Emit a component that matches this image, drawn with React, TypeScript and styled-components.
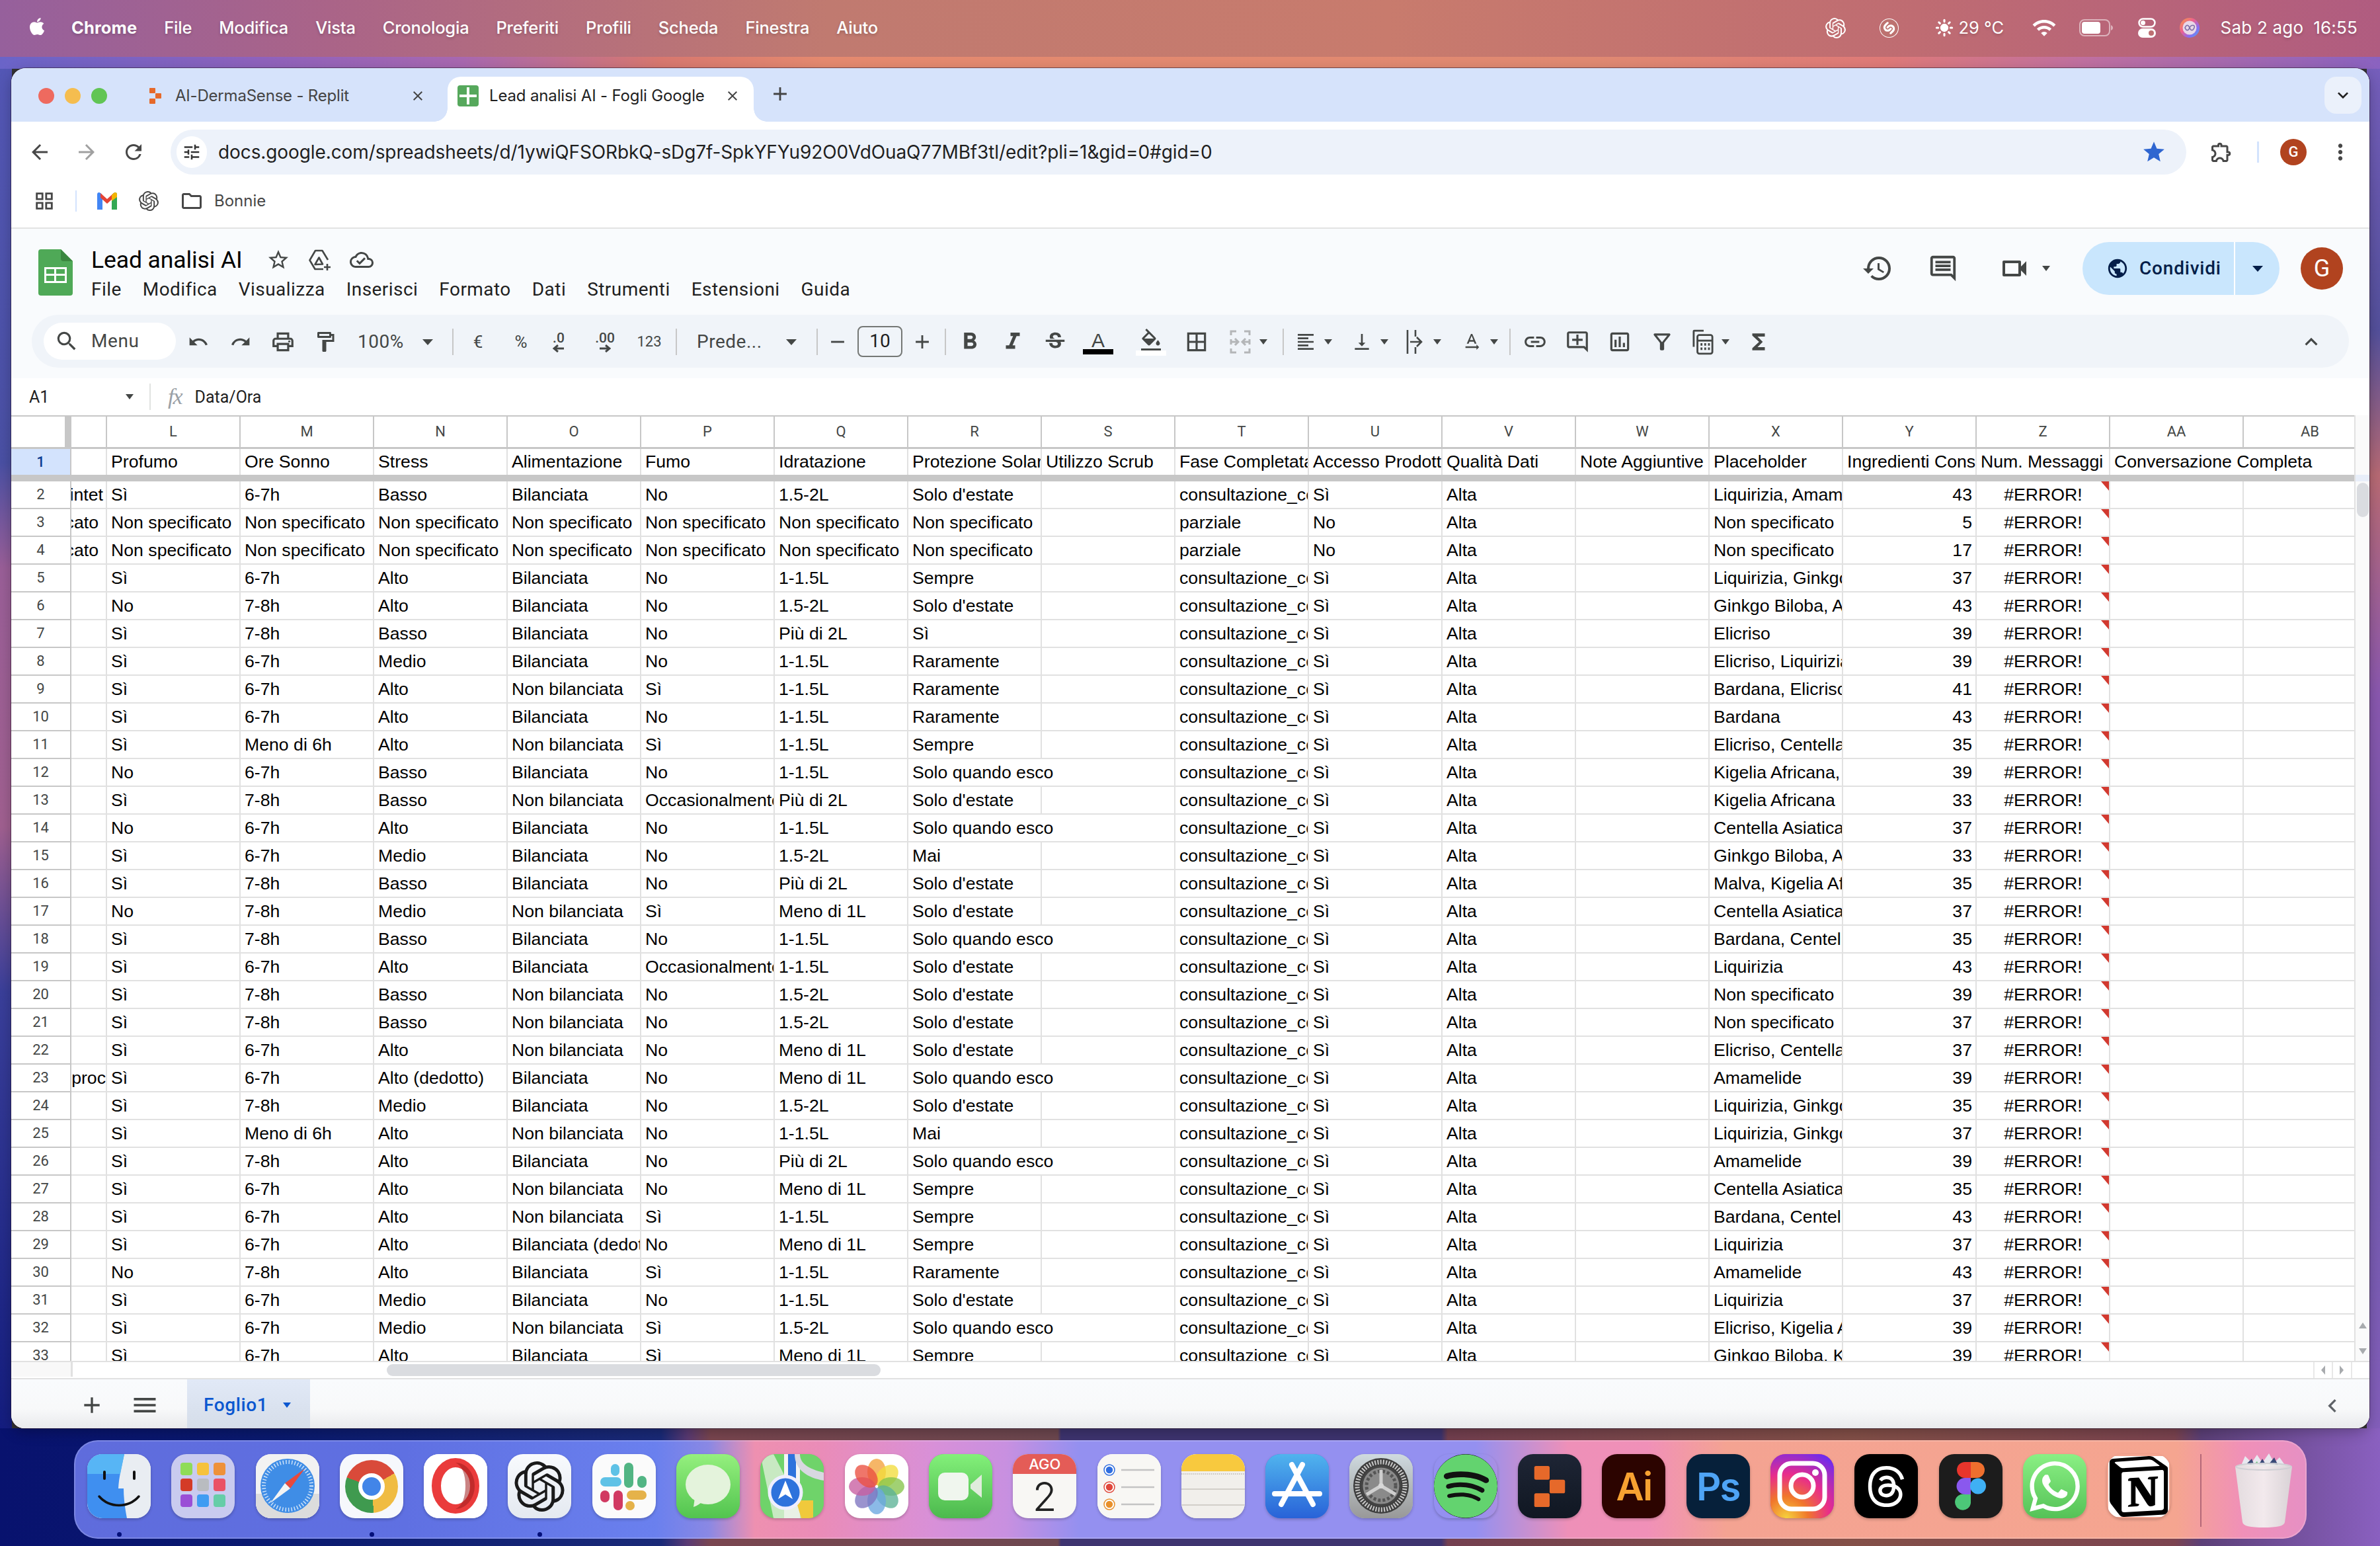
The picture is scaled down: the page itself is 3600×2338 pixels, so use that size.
import React from 'react';
import styled, { createGlobalStyle } from 'styled-components';
import {
  MdArrowBack, MdArrowForward, MdRefresh, MdTune, MdStar, MdOutlineExtension, MdMoreVert, MdKeyboardArrowDown,
  MdKeyboardArrowUp, MdKeyboardArrowLeft, MdClose, MdAdd, MdRemove, MdOutlineGridView, MdOutlineFolder, MdOutlineStarBorder,
  MdOutlineCloudDone, MdHistory, MdOutlineComment, MdOutlineVideocam, MdPublic, MdSearch, MdUndo, MdRedo,
  MdOutlinePrint, MdOutlineFormatPaint, MdFormatBold, MdFormatItalic, MdStrikethroughS, MdOutlineFormatColorFill, MdBorderAll,
  MdFormatAlignLeft, MdVerticalAlignBottom, MdLink, MdOutlineAddComment, MdOutlineInsertChart, MdOutlineFilterAlt, MdFunctions,
  MdMenu, MdTextRotationNone, MdWifi,
} from 'react-icons/md';
import { FaApple } from 'react-icons/fa';
import { SiOpenai, SiShazam, SiThreads, SiNotion, SiWhatsapp, SiSpotify } from 'react-icons/si';
import { Sun } from 'lucide-react';

const Global = createGlobalStyle`
  html, body { margin: 0; padding: 0; width: 3600px; height: 2338px; overflow: hidden; background: #333; }
  * { box-sizing: border-box; }
`;

const UI = `Inter, "Liberation Sans", sans-serif`;
const GS = `Roboto, "Open Sans", sans-serif`;
const ARIAL = `"Liberation Sans", Arial, sans-serif`;

const Desktop = styled.div`
  width: 3600px; height: 2338px; display: flex; flex-direction: column; overflow: hidden;
  background:
    linear-gradient(90deg, #6a64c8 0, #8f62bc 400px, #a868b0 700px, #d8786f 1000px, #e58a6f 1250px, #e08a72 2400px, #df7a78 2850px, #c070a0 3150px, #8a62c0 3600px) 0 86px / 100% 18px no-repeat,
    linear-gradient(90deg, #08126e 0, #0a1a70 420px, #1a2a78 1000px, #5a3a74 1040px, #7a4650 1075px, #6e4850 1600px, #3e3470 1605px, #3e3470 2180px, #744050 2190px, #845048 2800px, #7c4450 3290px, #5c4078 3330px, #8a60c0 3600px) 0 2160px / 100% 178px no-repeat,
    linear-gradient(180deg, #5558b8 0, #4a50a4 700px, #9a5f98 860px, #a06090 1250px, #3a3f9a 1500px, #0a1478 2338px) 0 0 / 18px 100% no-repeat,
    linear-gradient(180deg, #7e62c4 0, #54509c 500px, #b86a74 720px, #8a58b0 1050px, #6a58a8 1500px, #8a60c0 2338px) 100% 0 / 20px 100% no-repeat;
`;

const MenuBar = styled.header`
  height: 86px; flex: none; display: flex; align-items: center; padding: 0 34px 2px 41px; color: #fff;
  font: 500 25.5px/1 ${UI};
  background: linear-gradient(90deg, #96609c 0, #aa6488 500px, #c07a70 1250px, #c87b6d 2100px, #bf6c72 2900px, #b05c80 3600px);
  text-shadow: 0 2px 4px rgba(0,0,0,.2);
`;
const AppleMark = styled.span` width: 67px; display: flex; font-size: 30px; margin-top: -4px; `;
const MenuLabel = styled.span<{ $strong?: boolean }>`
  margin-right: 41px; font-weight: ${p => (p.$strong ? 700 : 500)}; letter-spacing: ${p => (p.$strong ? '.1px' : '-.2px')};
`;
const StatusBar = styled.div` margin-left: auto; display: flex; align-items: center; `;
const StatusItem = styled.span<{ $w: number }>`
  width: ${p => p.$w}px; display: flex; align-items: center; gap: 8px; font-weight: 400;
`;
const WhiteDisc = styled.span`
  width: 29px; height: 29px; border-radius: 50%; background: #fff; color: #bd7270; display: flex; align-items: center; justify-content: center;
`;
const Clock = styled.span` display: flex; gap: 15px; font-weight: 400; font-size: 26px; letter-spacing: .2px; `;

const BrowserWindow = styled.main`
  margin: 17px 16px 0 17px; height: 2057px; flex: none; border-radius: 22px 22px 20px 20px; overflow: hidden;
  display: flex; flex-direction: column; background: #fff;
  box-shadow: 0 0 0 1px rgba(40,20,40,.55), 0 6px 20px rgba(0,0,0,.25);
`;
const TabStrip = styled.div`
  height: 81px; flex: none; background: #d6e3fb; display: flex; align-items: flex-end; padding-left: 41px; position: relative;
`;
const Lights = styled.div` height: 68px; display: flex; align-items: center; gap: 16px; padding-bottom: 10px; `;
const Light = styled.span<{ $c: string }>` width: 24px; height: 24px; border-radius: 50%; background: ${p => p.$c}; `;
const InactiveTab = styled.div`
  height: 68px; width: 454px; margin-left: 61px; display: flex; align-items: center; padding: 0 33px 10px 0;
  font: 400 24px/1 ${UI}; color: #444; letter-spacing: -.2px;
`;
const TabFav = styled.span<{ $gap: number }>` display: flex; margin-right: ${p => p.$gap}px; `;
const TabClose = styled.span` margin-left: auto; display: flex; color: #444; `;
const ActiveTab = styled.div`
  height: 68px; width: 463px; background: #fff; border-radius: 20px 20px 0 0; display: flex; align-items: center;
  padding: 0 20px 10px 15px; font: 400 24px/1 ${UI}; color: #1f1f1f; position: relative; letter-spacing: -.15px;
  &::before, &::after { content: ''; position: absolute; bottom: 0; width: 20px; height: 20px; }
  &::before { left: -20px; background: radial-gradient(circle at 0 0, #d6e3fb 19.5px, #fff 20px); }
  &::after { right: -20px; background: radial-gradient(circle at 100% 0, #d6e3fb 19.5px, #fff 20px); }
`;
const NewTab = styled.span` margin: 0 0 8px 23px; height: 68px; display: flex; align-items: center; color: #444; `;
const TabListBtn = styled.span`
  margin: 0 12px 12px auto; width: 56px; height: 56px; border-radius: 18px; background: #ebf1fb; display: flex; align-items: center; justify-content: center; color: #1f1f1f;
`;
const NavRow = styled.div`
  height: 80px; flex: none; padding: 12px 0 0 25px; display: flex; align-items: flex-start; background: #fff; color: #474747;
  border-radius: 20px 20px 0 0;
`;
const NavIcons = styled.div` width: 216px; height: 68px; display: flex; align-items: center; gap: 35px; `;
const NavBtn = styled.span<{ $dim?: boolean }>` display: flex; color: ${p => (p.$dim ? '#a0a0a0' : '#474747')}; `;
const Omnibox = styled.div`
  width: 3049px; height: 68px; border-radius: 34px; background: #edf2fa; display: flex; align-items: center; padding: 0 30px 0 9px; color: #1f1f1f;
  font: 400 28px/1 ${UI}; letter-spacing: -.1px;
`;
const SiteInfo = styled.span`
  width: 46px; height: 48px; border-radius: 24px; background: #fff; display: flex; align-items: center; justify-content: center; margin-right: 17px; color: #333;
`;
const BookmarkStar = styled.span` margin-left: auto; display: flex; color: #2f66d0; `;
const NavRight = styled.div` height: 68px; display: flex; align-items: center; color: #474747; `;
const ExtBtn = styled.span` margin-left: 35px; display: flex; `;
const VLine = styled.span` width: 3px; height: 32px; background: #d3e3fd; margin: 0 32px 0 36px; `;
const ChromeAvatar = styled.span`
  width: 40px; height: 40px; border-radius: 50%; background: #b1431f; color: #fff; font: 500 22px/40px ${GS}; text-align: center;
`;
const MoreBtn = styled.span` margin-left: 32px; display: flex; `;
const BookmarkBar = styled.div`
  height: 82px; flex: none; border-bottom: 2px solid #e3e3e3; padding: 0 0 0 33px; display: flex; align-items: center; color: #474747;
  font: 400 24px/1 ${UI};
`;
const BarDivider = styled.span` width: 2px; height: 32px; background: #d3e3fd; margin: 0 30px; `;
const BookmarkIcon = styled.span` display: flex; margin-right: 32px; `;
const FolderLabel = styled.span` margin-left: 16px; `;

const SheetTop = styled.div` background: #f9fbfd; height: 226px; flex: none; padding-bottom: 16px; display: flex; flex-direction: column; `;
const TitleBar = styled.div` height: 130px; display: flex; padding: 31px 0 0 41px; `;
const TitleCol = styled.div` margin-left: 28px; display: flex; flex-direction: column; `;
const TitleLine = styled.div` height: 40px; display: flex; align-items: center; color: #444746; margin-top: -4px; `;
const DocTitle = styled.h1` font: 400 35.5px/40px ${GS}; color: #000; margin: 0 36px 0 0; letter-spacing: -.1px; `;
const TitleIcon = styled.span` width: 36px; display: flex; justify-content: center; margin-right: 27px; `;
const MenuLine = styled.nav`
  margin-top: 9px; display: flex; gap: 32px; font: 400 28px/32px ${GS}; color: #1f1f1f; letter-spacing: .45px;
`;
const HeaderActions = styled.div` margin-left: auto; height: 80px; padding-right: 40px; display: flex; align-items: center; color: #444746; margin-top: -11px; `;
const HeaderBtn = styled.span<{ $w: number; $gap?: number }>` width: ${p => p.$w}px; display: flex; align-items: center; gap: ${p => p.$gap ?? 0}px; `;
const ShareBtn = styled.div`
  width: 298px; height: 80px; margin-left: 32px; border-radius: 40px; background: #c9e6fd; display: flex; align-items: center;
  color: #041e49; font: 500 28px/1 ${GS}; letter-spacing: .8px;
`;
const ShareMain = styled.span`
  width: 231px; height: 80px; display: flex; align-items: center; gap: 16px; padding-left: 36px; border-right: 2px solid #fff;
`;
const ShareDrop = styled.span` flex: 1; display: flex; justify-content: center; `;
const SheetAvatar = styled.span`
  width: 64px; height: 64px; margin-left: 32px; border-radius: 50%; background: #b1431f; color: #fff; font: 400 36px/64px ${GS}; text-align: center;
`;
const ToolPill = styled.div`
  margin-left: 31px; width: 3505px; height: 80px; border-radius: 40px; background: #f0f4f9; display: flex; align-items: center; padding: 2px 38px 0 18px; color: #444746;
`;
const SearchBox = styled.div`
  width: 200px; height: 56px; margin-top: -2px; border-radius: 28px; background: #fff; margin-right: 2px; display: flex; align-items: center; gap: 18px; padding-left: 16px;
  font: 400 28px/1 ${GS}; color: #444746; letter-spacing: .6px;
`;
const Tool = styled.span<{ $w?: number; $pl?: number }>`
  width: ${p => p.$w ?? 64}px; height: 56px; flex: none; display: flex; align-items: center; justify-content: center; padding-left: ${p => p.$pl ?? 0}px; font: 400 26px/1 ${GS}; color: #444746;
`;
const SmallTool = styled(Tool)` font-size: 22px; `;
const Caret = styled.i<{ $c?: string }>`
  display: block; width: 0; height: 0; border-left: 8px solid transparent; border-right: 8px solid transparent; border-top: 9px solid ${p => p.$c ?? '#444746'};
`;
const SmallCaret = styled(Caret)` border-left-width: 6px; border-right-width: 6px; border-top-width: 8px; `;
const Select = styled.span<{ $w: number; $pl: number; $gap: number }>`
  width: ${p => p.$w}px; flex: none; height: 56px; display: flex; align-items: center; padding-left: ${p => p.$pl}px; gap: ${p => p.$gap}px; font: 400 28px/1 ${GS}; color: #444746; letter-spacing: .5px;
`;
const Dropdown = styled.span<{ $w: number; $dim?: boolean }>`
  width: ${p => p.$w}px; height: 56px; flex: none; display: flex; align-items: center; justify-content: center; gap: 12px; color: ${p => (p.$dim ? '#b4b6b8' : '#444746')};
`;
const IconBox = styled.span` width: 32px; display: flex; justify-content: center; `;
const Sep = styled.span<{ $ml?: number }>` width: 2px; height: 40px; flex: none; background: #c7c7c7; margin-left: ${p => p.$ml ?? 0}px; `;
const SizeBox = styled.span`
  width: 68px; height: 47px; margin-top: -2px; flex: none; border: 2px solid #747775; border-radius: 8px; display: flex; align-items: center; justify-content: center; font: 400 28px/1 ${GS}; color: #1f1f1f;
`;
const ColorStack = styled.span` width: 46px; display: flex; flex-direction: column; align-items: center; `;
const ColorBar = styled.span<{ $c: string }>` display: block; width: 46px; height: 8px; background: ${p => p.$c}; margin-top: -3px; `;
const ColorA = styled.span` font: 500 30px/32px ${ARIAL}; color: #444746; `;
const Stack = styled.span` display: flex; flex-direction: column; align-items: center; font: 500 21px/20px ${GS}; `;
const Collapse = styled.span` margin-left: auto; display: flex; `;

const FormulaBar = styled.div`
  height: 56px; flex: none; background: #fff; display: flex; align-items: center; padding-left: 27px; font: 400 25px/1 ${GS}; color: #1f1f1f;
`;
const NameBox = styled.span` width: 184px; display: flex; align-items: center; justify-content: space-between; padding-right: 24px; border-right: 2px solid #e1e3e1; height: 40px; `;
const Fx = styled.i` font: italic 400 34px/1 "Liberation Serif", serif; color: #9aa0a6; margin: 0 20px 0 26px; letter-spacing: -2px; `;

const GridArea = styled.section` height: 1432px; flex: none; display: flex; background: #fff; border-bottom: 2px solid #e1e1e1; `;
const GridBody = styled.div` width: 3544px; flex: none; overflow: hidden; border-top: 2px solid #c7c7c7; font: 400 26.67px/1 ${ARIAL}; color: #000; `;
const Row = styled.div<{ $h: number; $line: string; $lw: number }>`
  display: flex; height: ${p => p.$h}px; border-bottom: ${p => p.$lw}px solid ${p => p.$line};
`;
const Corner = styled.div` width: 91px; flex: none; border-right: 10px solid #c7c7c7; background: #fff; `;
const RowHead = styled.div<{ $on?: boolean }>`
  width: 91px; flex: none; display: flex; align-items: center; justify-content: center; margin-bottom: -2px;
  border-right: 2px solid #c7c7c7; border-bottom: 2px solid #c7c7c7; font: ${p => (p.$on ? 500 : 400)} 22px/1 ${GS};
  background: ${p => (p.$on ? '#d3e3fd' : '#fff')}; color: ${p => (p.$on ? '#0b3d91' : '#444746')};
`;
const ColHead = styled.div<{ $w: number }>`
  width: ${p => p.$w}px; flex: none; display: flex; align-items: center; justify-content: center;
  border-right: 2px solid #c7c7c7; font: 400 22px/1 ${GS}; color: #444746;
`;
const Cell = styled.div<{ $w: number; $align?: string; $spill?: boolean }>`
  width: ${p => p.$w}px; flex: none; overflow: ${p => (p.$spill ? 'visible' : 'hidden')}; white-space: nowrap; position: relative; display: flex; align-items: center;
  justify-content: ${p => p.$align ?? 'flex-start'}; padding: 0 5px 0 6px; border-right: 2px solid ${p => (p.$spill ? 'transparent' : '#e1e1e1')};
`;
const KCell = styled(Cell)<{ $pr: number }>` justify-content: flex-end; padding: 0 ${p => p.$pr}px 0 0; `;
const ErrorMark = styled.span`
  position: absolute; top: 0; right: 0; width: 0; height: 0; border-top: 14px solid #d2392f; border-left: 12px solid transparent;
`;
const Band = styled.div` height: 10px; background: #c7c7c7; `;
const VScroll = styled.aside` flex: 1; background: #fafafa; border-left: 2px solid #e1e1e1; display: flex; flex-direction: column; align-items: center; `;
const ScrollBand = styled.span` display: block; width: 100%; height: 10px; margin-top: 90px; background: #e8eef9; `;
const VThumb = styled.span` display: block; width: 18px; height: 52px; border-radius: 9px; background: #dadce0; margin-top: 2px; `;
const VArrows = styled.span` margin-top: auto; height: 66px; display: flex; flex-direction: column; align-items: center; justify-content: space-between; padding: 8px 0 10px; `;
const UpTri = styled.i` display: block; width: 0; height: 0; border-left: 6px solid transparent; border-right: 6px solid transparent; border-bottom: 9px solid #a8abae; `;
const DownTri = styled.i` display: block; width: 0; height: 0; border-left: 6px solid transparent; border-right: 6px solid transparent; border-top: 9px solid #a8abae; `;
const HScroll = styled.div` flex: none; display: flex; border-bottom: 2px solid #e1e1e1; height: 26px; background: #fff; `;
const HLeft = styled.span` width: 93px; flex: none; background: #f8f8f8; border-right: 3px solid #e1e1e1; margin-bottom: 2px; `;
const HTrack = styled.span` flex: 1; padding: 3px 0 0 475px; `;
const HThumb = styled.span` display: block; width: 747px; height: 18px; border-radius: 9px; background: #dadce0; `;
const HArrows = styled.span` width: 85px; flex: none; display: flex; align-items: center; `;
const HArrow = styled.span` width: 32px; height: 100%; display: flex; align-items: center; justify-content: center; border-left: 2px solid #e8e8e8; `;
const LeftTri = styled.i` display: block; width: 0; height: 0; border-top: 7px solid transparent; border-bottom: 7px solid transparent; border-right: 6px solid #a8abae; `;
const RightTri = styled.i` display: block; width: 0; height: 0; border-top: 7px solid transparent; border-bottom: 7px solid transparent; border-left: 6px solid #a8abae; `;
const SheetBar = styled.footer`
  flex: 1; display: flex; align-items: stretch; padding-left: 82px; color: #444746;
  background: linear-gradient(180deg, #f9fbfd 0, #f8f9fa 60%, #e9eaec 100%);
`;
const FootBtn = styled.span` width: 80px; display: flex; align-items: center; justify-content: center; padding-top: 4px; `;
const SheetTab = styled.div`
  width: 186px; margin-left: 24px; padding: 4px 0 0 25px; display: flex; align-items: center; gap: 23px; color: #0b57d0; font: 500 28px/1 ${GS}; letter-spacing: .6px;
  background: linear-gradient(180deg, #e1e9f7, #d5dde9);
`;
const FootRight = styled.span` margin-left: auto; width: 76px; color: #5f6368; display: flex; align-items: center; padding-top: 6px; `;

const Dock = styled.nav`
  position: relative; margin: 18px 0 0 112px; width: 3377px; height: 149px; flex: none; border-radius: 36px; padding: 21px 20px 0; display: flex; gap: 31.3px;
  background: linear-gradient(90deg, #5f6cdc 0, #5f70e2 500px, #6a80ee 880px, #8a88e4 960px, #ee90b0 1030px, #ea8cb8 1130px, #d890d8 1300px, #c890e0 1410px, #9490f0 1520px, #9490f0 2120px, #ee90b8 2260px, #f090b8 2380px, #f4a392 2500px, #f5a590 3180px, #f090b8 3280px, #e690c4 3377px);
  box-shadow: inset 0 0 0 2px rgba(255,255,255,.18);
`;
const DockItem = styled.div` position: relative; width: 96px; height: 97px; flex: none; `;
const RunDot = styled.span` position: absolute; left: 45px; top: 118px; width: 7px; height: 7px; border-radius: 50%; background: #04107a; `;
const Tile = styled.div<{ $bg: string }>`
  width: 96px; height: 97px; border-radius: 23px; background: ${p => p.$bg}; overflow: hidden; display: flex; align-items: center; justify-content: center;
  box-shadow: 0 2px 4px rgba(0,0,0,.22); position: relative;
`;
const CalendarTop = styled.div`
  position: absolute; left: 0; top: 0; width: 100%; height: 30px; background: #e45c57; color: #fff; font: 500 22px/30px ${UI}; text-align: center;
`;
const CalendarDay = styled.div` margin-top: 30px; font: 300 60px/1 ${UI}; color: #222; `;
const AdobeMark = styled.span<{ $c: string }>` font: 600 58px/1 ${UI}; color: ${p => p.$c}; letter-spacing: -2px; `;
const ChromeBall = styled.div`
  width: 80px; height: 80px; border-radius: 50%; display: flex; align-items: center; justify-content: center;
  background: conic-gradient(from -70deg, #d94a3a 0 130deg, #f0bc42 130deg 245deg, #3f9a4f 245deg 360deg);
`;
const ChromeEye = styled.div` width: 40px; height: 40px; border-radius: 50%; background: #4285e8; border: 6px solid #fff; `;
const DockSep = styled.span` width: 2px; height: 110px; margin: 0 18px 0 14px; background: rgba(130,60,90,.55); flex: none; `;
const TrashBox = styled.div` width: 88px; height: 112px; flex: none; margin-top: -1px; `;

const Sheet = ({ s = 32 }: { s?: number }) => (
  <svg width={s} height={s} viewBox="0 0 32 32"><rect width="32" height="32" rx="4" fill="#56a85c" /><path d="M14 3h4v11h11v4H18v11h-4V18H3v-4h11z" fill="#fff" /></svg>
);
const ReplitMark = ({ s = 24 }: { s?: number }) => (
  <svg width={s} height={s} viewBox="0 0 24 24" fill="#e6692a"><rect x="3" y="0" width="9" height="8" rx="1" /><rect x="12" y="8" width="9" height="8" rx="1" /><rect x="3" y="16" width="9" height="8" rx="1" /></svg>
);
const GmailMark = () => (
  <svg width="32" height="30" viewBox="0 0 32 30"><path d="M1 28V5c0-3 3-4 5-2l3 3v22z" fill="#4285f4" /><path d="M31 28V5c0-3-3-4-5-2l-3 3v22z" fill="#34a853" /><path d="M6 3l10 9 10-9 0 0v7L16 19 6 10z" fill="#e54335" /><path d="M23 6l3-3c2-2 5-1 5 2v4l-8 6z" fill="#f4b400" /></svg>
);
const SheetLogo = () => (
  <svg width="52" height="70" viewBox="0 0 52 70"><path d="M4 0h30l18 18v48a4 4 0 0 1-4 4H4a4 4 0 0 1-4-4V4a4 4 0 0 1 4-4z" fill="#4fa957" /><path d="M34 0l18 18H38a4 4 0 0 1-4-4z" fill="#3b873f" /><path d="M9 27h34v24H9zm3 3v7h12v-7zm15 0v7h13v-7zM12 40v8h12v-8zm15 0v8h13v-8z" fill="#fff" fillRule="evenodd" /></svg>
);
const DriveAdd = () => (
  <svg width="36" height="36" viewBox="0 0 36 36" fill="none" stroke="currentColor" strokeWidth="2.6" strokeLinejoin="round"><path d="M23 32H10.500L2.500 18.500 11 4h10.500L30 18" /><path d="M10.500 25l6-10.500 5.500 10z" /><path d="M29 24v10M24 29h10" /></svg>
);
const MergeGlyph = () => (
  <svg width="34" height="36" viewBox="0 0 34 36" fill="none" stroke="currentColor" strokeWidth="3"><path d="M11 2H3v6M23 2h8v6M11 34H3v-6M23 34h8v-6M3 14v8M31 14v8" /><path d="M2 18h11M9 13l5 5-5 5M32 18H21M25 13l-5 5 5 5" /></svg>
);
const WrapGlyph = () => (
  <svg width="28" height="36" viewBox="0 0 28 36" fill="none" stroke="currentColor" strokeWidth="2.6"><path d="M3 0v36M15 0v10M15 26v10M7 18h16M17 11l7 7-7 7" /></svg>
);
const FuncTable = () => (
  <svg width="34" height="40" viewBox="0 0 34 40" fill="none" stroke="currentColor" strokeWidth="3"><path d="M2 28V3a1 1 0 0 1 1-1h15" /><rect x="8" y="9" width="24" height="30" rx="3" /><path d="M8 18h24" /><path d="M13 24h3M19 24h3M25 24h3M13 31h3M19 31h3M25 31h3" strokeWidth="4" /></svg>
);
const ArrowLeftMini = () => (<svg width="18" height="12" viewBox="0 0 18 12" fill="none" stroke="currentColor" strokeWidth="3"><path d="M17 6H3M8 1L2 6l6 5" /></svg>);
const ArrowRightMini = () => (<svg width="18" height="12" viewBox="0 0 18 12" fill="none" stroke="currentColor" strokeWidth="3"><path d="M1 6h14M10 1l6 5-6 5" /></svg>);
const Battery = () => (
  <svg width="52" height="26" viewBox="0 0 52 26"><rect x="1" y="1" width="45" height="24" rx="7" fill="none" stroke="#fff" strokeOpacity=".5" strokeWidth="2" /><rect x="4" y="4" width="28" height="18" rx="4" fill="#fff" /><path d="M48 9c2 1 3 2 3 4s-1 3-3 4z" fill="#fff" fillOpacity=".5" /></svg>
);
const ControlCenter = () => (
  <svg width="27" height="30" viewBox="0 0 27 30"><rect x="1.500" y="1.500" width="24" height="12" rx="6" fill="none" stroke="#fff" strokeWidth="2.500" /><circle cx="7.500" cy="7.500" r="3.500" fill="#fff" /><rect x="0" y="16" width="27" height="14" rx="7" fill="#fff" /><circle cx="20" cy="23" r="4" fill="#bd6f72" /></svg>
);
const Siri = () => (
  <svg width="30" height="30" viewBox="0 0 30 30"><defs><linearGradient id="sg" x1="0" y1="0" x2="1" y2="1"><stop offset="0" stopColor="#f5a33f" /><stop offset=".4" stopColor="#ee5f8f" /><stop offset=".7" stopColor="#8a6cf2" /><stop offset="1" stopColor="#3fb2f0" /></linearGradient></defs><circle cx="15" cy="15" r="15" fill="url(#sg)" /><circle cx="15" cy="15" r="10.500" fill="#e8d8e8" /><path d="M8 15c2-5 5-5 7 0s5 5 7 0-5-5-7 0-5 5-7 0z" fill="none" stroke="#7f6fa8" strokeWidth="1.600" /></svg>
);

const Finder = () => (
  <svg width="96" height="97" viewBox="0 0 96 97"><rect width="96" height="97" fill="#e9edf2" /><path d="M0 0h56c-4 20-8 34-9 52h8c0 14 2 30 5 45H0z" fill="#3f8ff0" /><path d="M0 0h56l-6 30H0z" fill="#5ab9f5" opacity=".9" /><rect x="24" y="25" width="4" height="14" rx="2" fill="#111" /><rect x="69" y="25" width="4" height="14" rx="2" fill="#111" /><path d="M18 64c16 18 44 18 60 0" fill="none" stroke="#111" strokeWidth="3.500" strokeLinecap="round" /></svg>
);
const Launchpad = () => {
  const cs = ['#8fdc58', '#f6c23c', '#ee913a', '#d43b27', '#b9bcc0', '#ea5266', '#9a4fd6', '#3f9cf2', '#66cda8'];
  return (
    <svg width="72" height="72" viewBox="0 0 72 72">{cs.map((c, i) => <rect key={c} x={2 + (i % 3) * 25} y={(Math.floor(i / 3)) * 24} width="18" height="19" rx="4" fill={c} />)}</svg>
  );
};
const Safari = () => (
  <svg width="96" height="97" viewBox="0 0 96 97"><rect width="96" height="97" fill="#f2f2f2" /><rect y="60" width="96" height="37" fill="#dcdcdc" /><circle cx="48" cy="48" r="41" fill="#3f8de6" /><circle cx="48" cy="48" r="36" fill="none" stroke="#cfe3f8" strokeWidth="6" strokeDasharray="1.500 3" /><path d="M74 22L44 44l8 8z" fill="#e8493c" /><path d="M22 74l22-30 8 8z" fill="#f4f4f4" /></svg>
);
const Opera = () => (
  <svg width="96" height="97" viewBox="0 0 96 97"><rect width="96" height="97" fill="#fff" /><ellipse cx="48" cy="48" rx="29" ry="35" fill="none" stroke="#ea3b3b" strokeWidth="14" /><path d="M48 13c16 0 29 16 29 35S64 83 48 83c10-4 15-18 15-35S58 17 48 13z" fill="#9e1f1f" opacity=".55" /></svg>
);
const Slack = () => (
  <svg width="72" height="72" viewBox="0 0 72 72"><rect x="16" y="2" width="13" height="18" rx="6.500" fill="#5fc2e6" /><rect x="36" y="0" width="14" height="38" rx="7" fill="#52b584" /><rect x="56" y="20" width="14" height="18" rx="7" fill="#52b584" /><rect x="0" y="22" width="32" height="14" rx="7" fill="#5fc2e6" /><rect x="0" y="42" width="14" height="18" rx="7" fill="#d13a62" /><rect x="20" y="42" width="14" height="30" rx="7" fill="#d13a62" /><rect x="40" y="42" width="30" height="14" rx="7" fill="#e5b24a" /><rect x="38" y="58" width="14" height="14" rx="7" fill="#e5b24a" /></svg>
);
const Messages = () => (
  <svg width="96" height="97" viewBox="0 0 96 97"><defs><linearGradient id="mg" x1="0" y1="0" x2="0" y2="1"><stop offset="0" stopColor="#95f07e" /><stop offset="1" stopColor="#52c44f" /></linearGradient></defs><rect width="96" height="97" fill="url(#mg)" /><ellipse cx="48" cy="46" rx="34" ry="30" fill="#e4f3dc" /><path d="M28 66l-2 14c6-2 11-6 14-9z" fill="#e4f3dc" /></svg>
);
const Maps = () => (
  <svg width="96" height="97" viewBox="0 0 96 97"><rect width="96" height="97" fill="#6fd36a" /><path d="M36 0h24v97H36z" fill="#f4f4f4" /><path d="M42 0h12v60H42z" fill="#2d72dc" /><path d="M60 0c0 14 12 22 36 28v12C72 36 52 24 52 0z" fill="#d8d8e0" /><path d="M0 0h20l50 97H20z" fill="#e5f0e0" opacity=".75" /><path d="M54 70h26v27H62z" fill="#f0c93c" /><circle cx="38" cy="58" r="24" fill="#2d72dc" stroke="#eef" strokeWidth="5" /><path d="M38 40l11 28-11-7-11 7z" fill="#fff" /></svg>
);
const Photos = () => {
  const cs = ['#f4a23c', '#f2dd3c', '#86c44c', '#5cb296', '#6aa6e0', '#7e74c0', '#c85ea0', '#ea5040'];
  return (
    <svg width="84" height="84" viewBox="0 0 84 84">{cs.map((c, i) => <ellipse key={c} cx="42" cy="20" rx="14" ry="20" fill={c} fillOpacity=".78" transform={`rotate(${i * 45} 42 42)`} />)}</svg>
  );
};
const FaceTime = () => (
  <svg width="96" height="97" viewBox="0 0 96 97"><defs><linearGradient id="fg" x1="0" y1="0" x2="0" y2="1"><stop offset="0" stopColor="#83f07a" /><stop offset="1" stopColor="#4cb94d" /></linearGradient></defs><rect width="96" height="97" fill="url(#fg)" /><rect x="14" y="28" width="46" height="42" rx="10" fill="#f0f6ee" /><path d="M63 46l17-15v35L63 52z" fill="#e0ecdc" /></svg>
);
const Reminders = () => (
  <svg width="96" height="97" viewBox="0 0 96 97"><rect width="96" height="97" fill="#f8f7f4" />{[['#2f6ee0', 24], ['#e0483c', 50], ['#e8902c', 76]].map(([c, y]) => (<g key={c as string}><circle cx="18" cy={y as number} r="6" fill={c as string} stroke="#fff" strokeWidth="1.500" /><circle cx="18" cy={y as number} r="8" fill="none" stroke={c as string} strokeWidth="1.500" /><path d={`M36 ${y}h50`} stroke="#c4c4c4" strokeWidth="2.500" /></g>))}</svg>
);
const Notes = () => (
  <svg width="96" height="97" viewBox="0 0 96 97"><rect width="96" height="97" fill="#f1efeb" /><rect width="96" height="26" fill="#f8c93e" /><path d="M0 30h96" stroke="#c8c4bc" strokeWidth="2" strokeDasharray="1.500 1.500" /><path d="M0 53h96M0 77h96" stroke="#d2cfc9" strokeWidth="2" /></svg>
);
const AppStore = () => (
  <svg width="96" height="97" viewBox="0 0 96 97"><defs><linearGradient id="ag" x1="0" y1="0" x2="0" y2="1"><stop offset="0" stopColor="#50b4ee" /><stop offset="1" stopColor="#2862d8" /></linearGradient></defs><rect width="96" height="97" fill="url(#ag)" /><path d="M56 16L24 76M40 16l32 60M14 60h68" stroke="#fff" strokeWidth="8" strokeLinecap="round" /></svg>
);
const Settings = () => (
  <svg width="96" height="97" viewBox="0 0 96 97"><defs><linearGradient id="gg" x1="0" y1="0" x2="0" y2="1"><stop offset="0" stopColor="#cfdadf" /><stop offset="1" stopColor="#989898" /></linearGradient></defs><rect width="96" height="97" fill="url(#gg)" /><circle cx="48" cy="48" r="42" fill="#3e3e3e" /><circle cx="48" cy="48" r="36" fill="none" stroke="#c8c8c8" strokeWidth="7" strokeDasharray="2 2.200" /><circle cx="48" cy="48" r="29" fill="#8a8a8a" stroke="#444" strokeWidth="3" /><circle cx="48" cy="48" r="22" fill="none" stroke="#555" strokeWidth="5" strokeDasharray="4 3" /><path d="M48 48V24M48 48l22 13M48 48L26 61" stroke="#cfcfcf" strokeWidth="5" /><circle cx="48" cy="48" r="4" fill="#d8d8d8" /></svg>
);
const Insta = () => (
  <svg width="96" height="97" viewBox="0 0 96 97"><defs><radialGradient id="ig" cx=".25" cy="1" r="1.150"><stop offset="0" stopColor="#f6d23c" /><stop offset=".3" stopColor="#f0762c" /><stop offset=".6" stopColor="#e82c8c" /><stop offset="1" stopColor="#6a2cf0" /></radialGradient></defs><rect width="96" height="97" fill="url(#ig)" /><rect x="14" y="14" width="68" height="69" rx="18" fill="none" stroke="#fff" strokeWidth="7" /><circle cx="48" cy="48" r="17" fill="none" stroke="#fff" strokeWidth="7" /><circle cx="68" cy="28" r="5" fill="#fff" /></svg>
);
const Figma = () => (
  <svg width="54" height="74" viewBox="0 0 54 74"><path d="M18 0h9v24H18a12 12 0 0 1 0-24z" fill="#e8352c" /><path d="M27 0h9a12 12 0 0 1 0 24h-9z" fill="#ee6f2e" /><path d="M18 24h9v25H18a12 12 0 0 1 0-25z" fill="#8a58ee" /><circle cx="38" cy="36.500" r="12" fill="#3fb0f4" /><path d="M18 49h9v13a12 12 0 1 1-9-13z" fill="#4cc878" /></svg>
);
const Trash = () => (
  <svg width="88" height="112" viewBox="0 0 88 112"><defs><linearGradient id="tg" x1="0" y1="0" x2="1" y2="0"><stop offset="0" stopColor="#e2e2e2" /><stop offset=".5" stopColor="#f3f1f1" /><stop offset="1" stopColor="#d8d8d8" /></linearGradient></defs><path d="M10 18L16 4l10 10 8-12 8 12 10-14 8 14 8-8 10 14z" fill="#e8e8f0" /><path d="M18 16l8-8 4 10zM52 16l8-10 6 12zM36 18l6-10 6 10z" fill="#3a4a78" /><path d="M30 16l4-4 3 6z" fill="#5cc070" /><path d="M1 20c14-6 72-6 86 0l-11 84c-1 6-12 8-32 8s-31-2-32-8z" fill="url(#tg)" fillOpacity=".92" /><ellipse cx="44" cy="20" rx="42" ry="5" fill="none" stroke="#cfcfd4" strokeWidth="2" /></svg>
);

type Data = [string, string, string, string, string, string, string, string, string, string, number, string?, number?];
const Q = 'consultazione_completa';
const NS = 'Non specificato';
const rows: Data[] = [
  ['Sì', '6-7h', 'Basso', 'Bilanciata', 'No', '1.5-2L', "Solo d'estate", Q, 'Sì', 'Liquirizia, Amamelide', 43, 'intet', 4],
  [NS, NS, NS, NS, NS, NS, NS, 'parziale', 'No', NS, 5, 'cato', 11],
  [NS, NS, NS, NS, NS, NS, NS, 'parziale', 'No', NS, 17, 'cato', 11],
  ['Sì', '6-7h', 'Alto', 'Bilanciata', 'No', '1-1.5L', 'Sempre', Q, 'Sì', 'Liquirizia, Ginkgo', 37],
  ['No', '7-8h', 'Alto', 'Bilanciata', 'No', '1.5-2L', "Solo d'estate", Q, 'Sì', 'Ginkgo Biloba, Aloe', 43],
  ['Sì', '7-8h', 'Basso', 'Bilanciata', 'No', 'Più di 2L', 'Sì', Q, 'Sì', 'Elicriso', 39],
  ['Sì', '6-7h', 'Medio', 'Bilanciata', 'No', '1-1.5L', 'Raramente', Q, 'Sì', 'Elicriso, Liquirizia', 39],
  ['Sì', '6-7h', 'Alto', 'Non bilanciata', 'Sì', '1-1.5L', 'Raramente', Q, 'Sì', 'Bardana, Elicriso', 41],
  ['Sì', '6-7h', 'Alto', 'Bilanciata', 'No', '1-1.5L', 'Raramente', Q, 'Sì', 'Bardana', 43],
  ['Sì', 'Meno di 6h', 'Alto', 'Non bilanciata', 'Sì', '1-1.5L', 'Sempre', Q, 'Sì', 'Elicriso, Centella', 35],
  ['No', '6-7h', 'Basso', 'Bilanciata', 'No', '1-1.5L', 'Solo quando esco', Q, 'Sì', 'Kigelia Africana, Malva', 39],
  ['Sì', '7-8h', 'Basso', 'Non bilanciata', 'Occasionalmente', 'Più di 2L', "Solo d'estate", Q, 'Sì', 'Kigelia Africana', 33],
  ['No', '6-7h', 'Alto', 'Bilanciata', 'No', '1-1.5L', 'Solo quando esco', Q, 'Sì', 'Centella Asiatica', 37],
  ['Sì', '6-7h', 'Medio', 'Bilanciata', 'No', '1.5-2L', 'Mai', Q, 'Sì', 'Ginkgo Biloba, Aloe', 33],
  ['Sì', '7-8h', 'Basso', 'Bilanciata', 'No', 'Più di 2L', "Solo d'estate", Q, 'Sì', 'Malva, Kigelia Africana', 35],
  ['No', '7-8h', 'Medio', 'Non bilanciata', 'Sì', 'Meno di 1L', "Solo d'estate", Q, 'Sì', 'Centella Asiatica', 37],
  ['Sì', '7-8h', 'Basso', 'Bilanciata', 'No', '1-1.5L', 'Solo quando esco', Q, 'Sì', 'Bardana, Centella', 35],
  ['Sì', '6-7h', 'Alto', 'Bilanciata', 'Occasionalmente', '1-1.5L', "Solo d'estate", Q, 'Sì', 'Liquirizia', 43],
  ['Sì', '7-8h', 'Basso', 'Non bilanciata', 'No', '1.5-2L', "Solo d'estate", Q, 'Sì', NS, 39],
  ['Sì', '7-8h', 'Basso', 'Non bilanciata', 'No', '1.5-2L', "Solo d'estate", Q, 'Sì', NS, 37],
  ['Sì', '6-7h', 'Alto', 'Non bilanciata', 'No', 'Meno di 1L', "Solo d'estate", Q, 'Sì', 'Elicriso, Centella', 37],
  ['Sì', '6-7h', 'Alto (dedotto)', 'Bilanciata', 'No', 'Meno di 1L', 'Solo quando esco', Q, 'Sì', 'Amamelide', 39, 'proc', 0],
  ['Sì', '7-8h', 'Medio', 'Bilanciata', 'No', '1.5-2L', "Solo d'estate", Q, 'Sì', 'Liquirizia, Ginkgo', 35],
  ['Sì', 'Meno di 6h', 'Alto', 'Non bilanciata', 'No', '1-1.5L', 'Mai', Q, 'Sì', 'Liquirizia, Ginkgo', 37],
  ['Sì', '7-8h', 'Alto', 'Bilanciata', 'No', 'Più di 2L', 'Solo quando esco', Q, 'Sì', 'Amamelide', 39],
  ['Sì', '6-7h', 'Alto', 'Non bilanciata', 'No', 'Meno di 1L', 'Sempre', Q, 'Sì', 'Centella Asiatica', 35],
  ['Sì', '6-7h', 'Alto', 'Non bilanciata', 'Sì', '1-1.5L', 'Sempre', Q, 'Sì', 'Bardana, Centella', 43],
  ['Sì', '6-7h', 'Alto', 'Bilanciata (dedotto)', 'No', 'Meno di 1L', 'Sempre', Q, 'Sì', 'Liquirizia', 37],
  ['No', '7-8h', 'Alto', 'Bilanciata', 'Sì', '1-1.5L', 'Raramente', Q, 'Sì', 'Amamelide', 43],
  ['Sì', '6-7h', 'Medio', 'Bilanciata', 'No', '1-1.5L', "Solo d'estate", Q, 'Sì', 'Liquirizia', 37],
  ['Sì', '6-7h', 'Medio', 'Non bilanciata', 'Sì', '1.5-2L', 'Solo quando esco', Q, 'Sì', 'Elicriso, Kigelia Africana', 39],
  ['Sì', '6-7h', 'Alto', 'Bilanciata', 'Sì', 'Meno di 1L', 'Sempre', Q, 'Sì', 'Ginkgo Biloba, Kigelia', 39],
];
const letters = ['L', 'M', 'N', 'O', 'P', 'Q', 'R', 'S', 'T', 'U', 'V', 'W', 'X', 'Y', 'Z', 'AA'];
const titles = ['Profumo', 'Ore Sonno', 'Stress', 'Alimentazione', 'Fumo', 'Idratazione', 'Protezione Solare', 'Utilizzo Scrub', 'Fase Completata', 'Accesso Prodotto', 'Qualità Dati', 'Note Aggiuntive', 'Placeholder', 'Ingredienti Consigliati', 'Num. Messaggi'];
const CW = 202;
const KW = 54;
const menus = ['Chrome', 'File', 'Modifica', 'Vista', 'Cronologia', 'Preferiti', 'Profili', 'Scheda', 'Finestra', 'Aiuto'];
const sheetMenus = ['File', 'Modifica', 'Visualizza', 'Inserisci', 'Formato', 'Dati', 'Strumenti', 'Estensioni', 'Guida'];

export default function App() {
  return (
    <Desktop>
      <Global />
      <MenuBar>
        <AppleMark><FaApple /></AppleMark>
        {menus.map((m, i) => <MenuLabel key={m} $strong={i === 0}>{m}</MenuLabel>)}
        <StatusBar>
          <StatusItem $w={82}><SiOpenai size={31} /></StatusItem>
          <StatusItem $w={84}><WhiteDisc><SiShazam size={27} /></WhiteDisc></StatusItem>
          <StatusItem $w={146}><Sun size={28} strokeWidth={2.6} fill="#fff" />29 °C</StatusItem>
          <StatusItem $w={72}><MdWifi size={38} /></StatusItem>
          <StatusItem $w={89}><Battery /></StatusItem>
          <StatusItem $w={63}><ControlCenter /></StatusItem>
          <StatusItem $w={62}><Siri /></StatusItem>
          <Clock><span>Sab 2 ago</span><span>16:55</span></Clock>
        </StatusBar>
      </MenuBar>
      <BrowserWindow>
        <TabStrip>
          <Lights><Light $c="#ee6a5f" /><Light $c="#f5bd4f" /><Light $c="#61c554" /></Lights>
          <InactiveTab>
            <TabFav $gap={18}><ReplitMark /></TabFav>AI-DermaSense - Replit
            <TabClose><MdClose size={24} /></TabClose>
          </InactiveTab>
          <ActiveTab>
            <TabFav $gap={16}><Sheet /></TabFav>Lead analisi AI - Fogli Google
            <TabClose><MdClose size={24} /></TabClose>
          </ActiveTab>
          <NewTab><MdAdd size={34} /></NewTab>
          <TabListBtn><MdKeyboardArrowDown size={32} /></TabListBtn>
        </TabStrip>
        <NavRow>
          <NavIcons>
            <NavBtn><MdArrowBack size={36} /></NavBtn>
            <NavBtn $dim><MdArrowForward size={36} /></NavBtn>
            <NavBtn><MdRefresh size={36} /></NavBtn>
          </NavIcons>
          <Omnibox>
            <SiteInfo><MdTune size={30} /></SiteInfo>
            docs.google.com/spreadsheets/d/1ywiQFSORbkQ-sDg7f-SpkYFYu92O0VdOuaQ77MBf3tl/edit?pli=1&amp;gid=0#gid=0
            <BookmarkStar><MdStar size={38} /></BookmarkStar>
          </Omnibox>
          <NavRight>
            <ExtBtn><MdOutlineExtension size={36} /></ExtBtn>
            <VLine />
            <ChromeAvatar>G</ChromeAvatar>
            <MoreBtn><MdMoreVert size={38} /></MoreBtn>
          </NavRight>
        </NavRow>
        <BookmarkBar>
          <MdOutlineGridView size={34} />
          <BarDivider />
          <BookmarkIcon><GmailMark /></BookmarkIcon>
          <BookmarkIcon><SiOpenai size={30} /></BookmarkIcon>
          <MdOutlineFolder size={36} />
          <FolderLabel>Bonnie</FolderLabel>
        </BookmarkBar>
        <SheetTop>
          <TitleBar>
            <SheetLogo />
            <TitleCol>
              <TitleLine>
                <DocTitle>Lead analisi AI</DocTitle>
                <TitleIcon><MdOutlineStarBorder size={36} /></TitleIcon>
                <TitleIcon><DriveAdd /></TitleIcon>
                <TitleIcon><MdOutlineCloudDone size={38} /></TitleIcon>
              </TitleLine>
              <MenuLine>{sheetMenus.map(m => <span key={m}>{m}</span>)}</MenuLine>
            </TitleCol>
            <HeaderActions>
              <HeaderBtn $w={100}><MdHistory size={48} /></HeaderBtn>
              <HeaderBtn $w={107}><MdOutlineComment size={46} /></HeaderBtn>
              <HeaderBtn $w={95} $gap={18}><MdOutlineVideocam size={48} /><SmallCaret /></HeaderBtn>
              <ShareBtn>
                <ShareMain><MdPublic size={34} />Condividi</ShareMain>
                <ShareDrop><Caret $c="#041e49" /></ShareDrop>
              </ShareBtn>
              <SheetAvatar>G</SheetAvatar>
            </HeaderActions>
          </TitleBar>
          <ToolPill>
            <SearchBox><MdSearch size={38} />Menu</SearchBox>
            <Tool><MdUndo size={32} /></Tool>
            <Tool><MdRedo size={32} /></Tool>
            <Tool><MdOutlinePrint size={38} /></Tool>
            <Tool><MdOutlineFormatPaint size={36} /></Tool>
            <Select $w={160} $pl={17} $gap={28}>100%<Caret /></Select>
            <Sep />
            <Tool $w={74}>€</Tool>
            <Tool $w={56}>%</Tool>
            <Tool $w={58}><Stack>.0<ArrowLeftMini /></Stack></Tool>
            <Tool $w={82}><Stack>.00<ArrowRightMini /></Stack></Tool>
            <SmallTool $w={52}>123</SmallTool>
            <Sep $ml={14} />
            <Select $w={211} $pl={30} $gap={36}>Prede...<Caret /></Select>
            <Sep />
            <Tool $w={60}><MdRemove size={34} /></Tool>
            <SizeBox>10</SizeBox>
            <Tool $w={60}><MdAdd size={34} /></Tool>
            <Sep $ml={4} />
            <Tool $w={72}><MdFormatBold size={42} /></Tool>
            <Tool $w={58}><MdFormatItalic size={42} /></Tool>
            <Tool $w={70}><MdStrikethroughS size={38} /></Tool>
            <Tool $w={60}><ColorStack><ColorA>A</ColorA><ColorBar $c="#000" /></ColorStack></Tool>
            <Tool $w={94} $pl={6}><ColorStack><MdOutlineFormatColorFill size={36} /><ColorBar $c="#fff" /></ColorStack></Tool>
            <Tool $w={50}><MdBorderAll size={38} /></Tool>
            <Dropdown $w={105} $dim><MergeGlyph /><SmallCaret /></Dropdown>
            <Sep />
            <Dropdown $w={90}><IconBox><MdFormatAlignLeft size={38} /></IconBox><SmallCaret /></Dropdown>
            <Dropdown $w={80}><IconBox><MdVerticalAlignBottom size={38} /></IconBox><SmallCaret /></Dropdown>
            <Dropdown $w={80}><IconBox><WrapGlyph /></IconBox><SmallCaret /></Dropdown>
            <Dropdown $w={91}><IconBox><MdTextRotationNone size={40} /></IconBox><SmallCaret /></Dropdown>
            <Sep />
            <Tool $w={74}><MdLink size={38} /></Tool>
            <Tool $w={54}><MdOutlineAddComment size={38} /></Tool>
            <Tool $w={74}><MdOutlineInsertChart size={38} /></Tool>
            <Tool $w={54}><MdOutlineFilterAlt size={38} /></Tool>
            <Dropdown $w={94}><IconBox><FuncTable /></IconBox><SmallCaret /></Dropdown>
            <Tool $w={50}><MdFunctions size={38} /></Tool>
            <Collapse><MdKeyboardArrowUp size={38} /></Collapse>
          </ToolPill>
        </SheetTop>
        <FormulaBar>
          <NameBox>A1<SmallCaret /></NameBox>
          <Fx>fx</Fx>Data/Ora
        </FormulaBar>
        <GridArea>
          <GridBody>
            <Row $h={49} $line="#c7c7c7" $lw={3}>
              <Corner />
              <ColHead $w={KW} />
              {letters.map(l => <ColHead key={l} $w={CW}>{l}</ColHead>)}
              <ColHead $w={CW}>AB</ColHead>
            </Row>
            <Row $h={39} $line="transparent" $lw={0}>
              <RowHead $on>1</RowHead>
              <Cell $w={KW} />
              {titles.map(t => <Cell key={t} $w={CW}>{t}</Cell>)}
              <Cell $w={CW} $spill>Conversazione Completa</Cell>
            </Row>
            <Band />
            {rows.map((r, i) => (
              <Row key={i} $h={42} $line="#e1e1e1" $lw={2}>
                <RowHead>{i + 2}</RowHead>
                <KCell $w={KW} $pr={r[12] ?? 0}>{r[11]}</KCell>
                <Cell $w={CW}>{r[0]}</Cell>
                <Cell $w={CW}>{r[1]}</Cell>
                <Cell $w={CW}>{r[2]}</Cell>
                <Cell $w={CW}>{r[3]}</Cell>
                <Cell $w={CW}>{r[4]}</Cell>
                <Cell $w={CW}>{r[5]}</Cell>
                <Cell $w={CW} $spill={r[6].length > 15}>{r[6]}</Cell>
                <Cell $w={CW} />
                <Cell $w={CW}>{r[7]}</Cell>
                <Cell $w={CW}>{r[8]}</Cell>
                <Cell $w={CW}>Alta</Cell>
                <Cell $w={CW} />
                <Cell $w={CW}>{r[9]}</Cell>
                <Cell $w={CW} $align="flex-end">{r[10]}</Cell>
                <Cell $w={CW} $align="center">#ERROR!<ErrorMark /></Cell>
                <Cell $w={CW} />
                <Cell $w={CW} />
              </Row>
            ))}
          </GridBody>
          <VScroll>
            <ScrollBand />
            <VThumb />
            <VArrows><UpTri /><DownTri /></VArrows>
          </VScroll>
        </GridArea>
        <HScroll>
          <HLeft />
          <HTrack><HThumb /></HTrack>
          <HArrows>
            <HArrow><LeftTri /></HArrow>
            <HArrow><RightTri /></HArrow>
            <HArrow />
          </HArrows>
        </HScroll>
        <SheetBar>
          <FootBtn><MdAdd size={40} /></FootBtn>
          <FootBtn><MdMenu size={44} /></FootBtn>
          <SheetTab>Foglio1<SmallCaret $c="#0b57d0" /></SheetTab>
          <FootRight><MdKeyboardArrowLeft size={40} /></FootRight>
        </SheetBar>
      </BrowserWindow>
      <Dock>
        <DockItem><Tile $bg="#e9edf2"><Finder /></Tile><RunDot /></DockItem>
        <DockItem><Tile $bg="#c9cbef"><Launchpad /></Tile></DockItem>
        <DockItem><Tile $bg="#f2f2f2"><Safari /></Tile></DockItem>
        <DockItem><Tile $bg="#f6f8fc"><ChromeBall><ChromeEye /></ChromeBall></Tile><RunDot /></DockItem>
        <DockItem><Tile $bg="#fff"><Opera /></Tile></DockItem>
        <DockItem><Tile $bg="linear-gradient(180deg,#f8fafd,#e4e9f0)"><SiOpenai size={76} color="#1a1a1a" /></Tile><RunDot /></DockItem>
        <DockItem><Tile $bg="#fbfbfb"><Slack /></Tile></DockItem>
        <DockItem><Tile $bg="#5cd060"><Messages /></Tile></DockItem>
        <DockItem><Tile $bg="#6fd36a"><Maps /></Tile></DockItem>
        <DockItem><Tile $bg="#fff"><Photos /></Tile></DockItem>
        <DockItem><Tile $bg="#5cd060"><FaceTime /></Tile></DockItem>
        <DockItem><Tile $bg="#f8f7f4"><CalendarTop>AGO</CalendarTop><CalendarDay>2</CalendarDay></Tile></DockItem>
        <DockItem><Tile $bg="#f8f7f4"><Reminders /></Tile></DockItem>
        <DockItem><Tile $bg="#f1efeb"><Notes /></Tile></DockItem>
        <DockItem><Tile $bg="#3a80e0"><AppStore /></Tile></DockItem>
        <DockItem><Tile $bg="#b8c4c8"><Settings /></Tile></DockItem>
        <DockItem><Tile $bg="transparent"><SiSpotify size={97} color="#63d36f" style={{ background: '#111', borderRadius: '50%' }} /></Tile></DockItem>
        <DockItem><Tile $bg="linear-gradient(180deg,#1e2535,#101722)"><ReplitMark s={62} /></Tile></DockItem>
        <DockItem><Tile $bg="#2c0400"><AdobeMark $c="#f7a231">Ai</AdobeMark></Tile></DockItem>
        <DockItem><Tile $bg="#06203a"><AdobeMark $c="#4ea4f5">Ps</AdobeMark></Tile></DockItem>
        <DockItem><Tile $bg="#e82c8c"><Insta /></Tile></DockItem>
        <DockItem><Tile $bg="#000"><SiThreads size={62} color="#fff" /></Tile></DockItem>
        <DockItem><Tile $bg="#1c1c1c"><Figma /></Tile></DockItem>
        <DockItem><Tile $bg="linear-gradient(180deg,#8af084,#55c257)"><SiWhatsapp size={76} color="#fff" /></Tile></DockItem>
        <DockItem><Tile $bg="transparent"><SiNotion size={92} color="#000" style={{ background: '#fff', borderRadius: 8 }} /></Tile></DockItem>
        <DockSep />
        <TrashBox><Trash /></TrashBox>
      </Dock>
    </Desktop>
  );
}
